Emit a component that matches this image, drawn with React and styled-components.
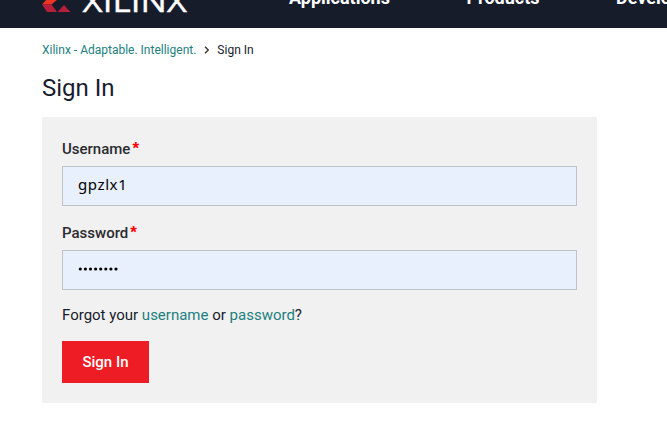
import React from "react";
import styled, { createGlobalStyle } from "styled-components";

const GlobalStyle = createGlobalStyle`
  * { box-sizing: border-box; }
  html, body { margin: 0; background: #fff; overflow: hidden; }
  body { font-family: Roboto, sans-serif; font-size: 15px; color: #171c2d; }
`;

const Header = styled.header`
  height: 28px;
  padding-left: 42px;
  background: #171c2b;
  display: flex;
  align-items: flex-start;
  overflow: hidden;
`;

const Logo = styled.svg`
  flex: none;
  width: 150px;
  height: 28px;
  margin-right: 97px;
`;

const Wordmark = styled.text`
  font-family: "Open Sans", sans-serif;
  font-size: 30px;
  font-weight: 500;
  fill: #fff;
  stroke: #fff;
  stroke-width: 0.4px;
`;

const Nav = styled.nav`
  display: flex;
  gap: 76.5px;
  margin-top: -12px;
  white-space: nowrap;
`;

const NavItem = styled.a`
  color: #fff;
  font-size: 18px;
  line-height: 20px;
  font-weight: 700;
`;

const Main = styled.main`
  width: 597px;
  padding-left: 42px;
`;

const Breadcrumb = styled.nav`
  display: flex;
  align-items: center;
  height: 20px;
  margin-top: 12px;
  font-size: 12px;
`;

const Chevron = styled.svg`
  width: 6px;
  height: 8px;
  margin: 0 7px 0 8px;
`;

const Link = styled.a`
  color: #1c8080;
`;

const Title = styled.h1`
  margin: 13px 0 14px;
  font-size: 24px;
  line-height: 30px;
  font-weight: 400;
`;

const Form = styled.form`
  height: 286px;
  padding: 22px 20px 20px;
  background: #f1f1f1;
`;

const Label = styled.label`
  display: block;
  height: 27px;
  line-height: 20px;
  font-weight: 500;
  color: #2b2b2f;
`;

const Required = styled.span`
  margin-left: 2px;
  color: #f00;
  font: 700 17px/1 "Liberation Sans", sans-serif;
`;

const Field = styled.div`
  display: flex;
  align-items: center;
  height: 40px;
  margin-bottom: 17px;
  padding: 0 15px 4px;
  border: 1px solid #c1c2c8;
  background: #e8f0fe;
  color: #000;
  font: 15px "Noto Sans", sans-serif;
  letter-spacing: ${(p) => p.$spacing || "0"};
`;

const Dots = styled.svg`
  width: 42px;
  height: 4px;
  margin-top: 2px;
`;

const Help = styled.p`
  margin: -2px 0 16px;
  line-height: 20px;
`;

const Button = styled.button`
  display: block;
  width: 87px;
  height: 42px;
  padding: 0;
  border: 0;
  background: #ee1c24;
  color: #fff;
  font: 500 15px Roboto, sans-serif;
`;

export default function App() {
  return (
    <>
      <GlobalStyle />
      <Header>
        <Logo viewBox="0 0 150 28" aria-label="Xilinx">
          <polygon points="5,-1 16,-1 9.5,4.5 0,4.5" fill="#ee3524" />
          <polygon points="0,4.5 9.5,4.5 15,12 5,12" fill="#b51f3b" />
          <polygon points="22,5 28.5,12 15.5,12" fill="#b51f3b" />
          <Wordmark x="40.5" y="12" textLength="104.5" lengthAdjust="spacingAndGlyphs">XILINX</Wordmark>
        </Logo>
        <Nav>
          <NavItem>Applications</NavItem>
          <NavItem>Products</NavItem>
          <NavItem>Developers</NavItem>
        </Nav>
      </Header>
      <Main>
        <Breadcrumb>
          <Link>Xilinx - Adaptable. Intelligent.</Link>
          <Chevron viewBox="0 0 6 8">
            <path d="M1 .7 4.3 4 1 7.3" fill="none" stroke="#333" strokeWidth="1.3" />
          </Chevron>
          <span>Sign In</span>
        </Breadcrumb>
        <Title>Sign In</Title>
        <Form>
          <Label>Username<Required>*</Required></Label>
          <Field $spacing="0.6px">gpzlx1</Field>
          <Label>Password<Required>*</Required></Label>
          <Field>
            <Dots viewBox="0 0 42 4">
              {Array.from({ length: 8 }, (_, i) => (
                <circle key={i} cx={2.3 + i * 5.1} cy="2" r="1.6" />
              ))}
            </Dots>
          </Field>
          <Help>
            Forgot your <Link>username</Link> or <Link>password</Link>?
          </Help>
          <Button type="button">Sign In</Button>
        </Form>
      </Main>
    </>
  );
}
